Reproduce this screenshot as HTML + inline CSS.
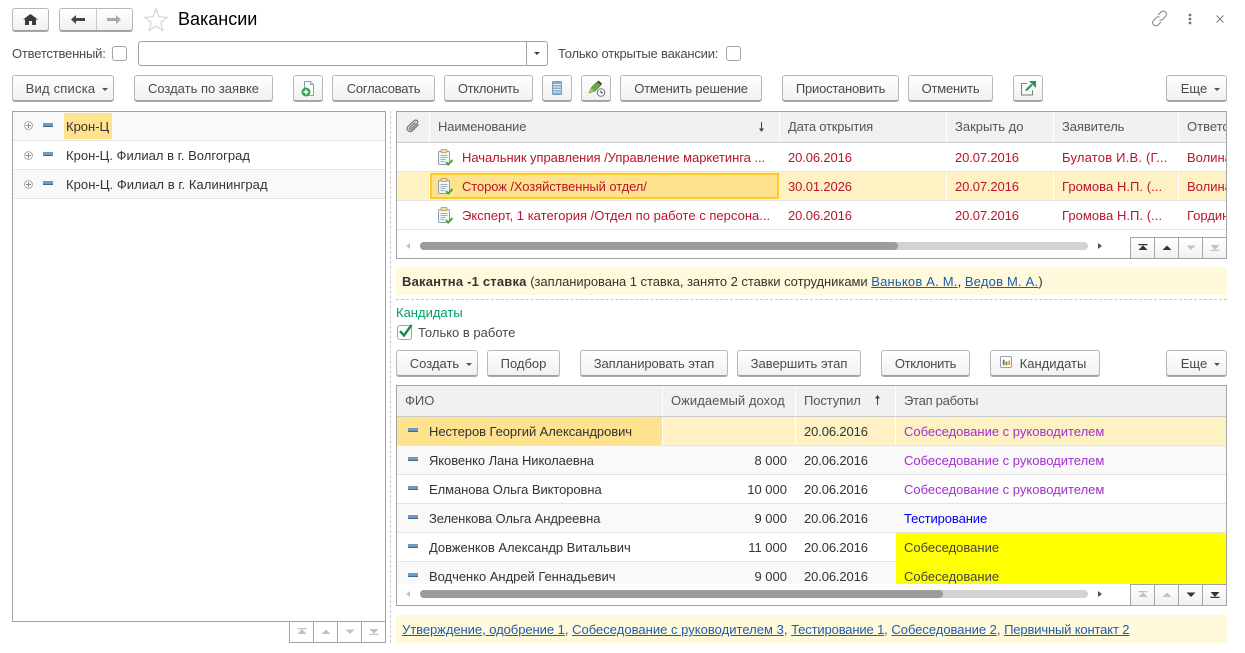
<!DOCTYPE html>
<html lang="ru"><head><meta charset="utf-8"><title>Вакансии</title>
<style>
html,body{margin:0;padding:0;background:#fff}
#p{position:relative;width:1245px;height:653px;overflow:hidden;background:#fff;font:13px/16px "Liberation Sans",Arial,sans-serif;color:#4a4a4a}
#p div,#p a,#p svg{position:absolute;box-sizing:border-box}
.t{white-space:nowrap}
.b{height:26px;top:75px;border:1px solid #b8b8b8;border-bottom:1px solid #a0a0a0;border-radius:3px;background:linear-gradient(#fff,#f1f1f1);box-shadow:0 1px 0 #a8a8a8;text-align:center;line-height:25px;white-space:nowrap;color:#4a4a4a}
.dd{padding-left:8px}
.b2{top:350px}
.tri{display:inline-block;width:0;height:0;border:3px solid transparent;border-top:3px solid #555;border-bottom:0;margin-left:7px;vertical-align:2px}
.box{position:absolute;border:1px solid #a4a4a4}
.h{background:#f1f1f1}
.th{white-space:nowrap;color:#555;line-height:16px}
.c{white-space:nowrap;color:#333;line-height:16px}
.d{letter-spacing:-.12px}
.r{color:#b9152f}
.m{color:#a22fd2}
a{color:#1f5cb0;text-decoration:underline}
#p a{position:static}
.l{height:1px;background:#e4e4e4}
.n{width:24px;height:22px;background:linear-gradient(#fff,#f1f1f1);border:1px solid #a4a4a4;border-right:0}
.n svg{left:0;top:-1px}
</style></head><body><div id="p">
<svg width="0" height="0" style="left:0;top:0"><defs>
<symbol id="minus" viewBox="0 0 10 4"><rect width="10" height="3" fill="#6f9abf"/><rect y="3" width="10" height="1" fill="#44688a"/></symbol>
<symbol id="plus" viewBox="0 0 9 9"><circle cx="4.500" cy="4.500" r="3.900" fill="#fff" stroke="#a8a8a8"/><path d="M4.500 2v5M2 4.500h5" stroke="#888"/></symbol>
<symbol id="task" viewBox="0 0 18 18"><rect x="1.500" y="2.500" width="11" height="13" rx="1" fill="#f0f5f8" stroke="#8fa0ac"/><rect x="4" y=".5" width="6" height="3" rx="1" fill="#f6dc94" stroke="#a8955a" stroke-width=".8"/><path d="M3.500 6.500h7M3.500 8.500h7M3.500 10.500h5M3.500 12.500h4" stroke="#9fb0bd"/><path d="M9 13l2.200 2.500 4.300-4.500" fill="none" stroke="#4aa82f" stroke-width="2"/></symbol>
<symbol id="up2" viewBox="0 0 24 22"><path d="M7.500 7h9v1.200h-9zM7.500 13l4.500-4.800 4.500 4.800z"/></symbol>
<symbol id="up" viewBox="0 0 24 22"><path d="M7.500 13l4.500-4.500 4.500 4.500z"/></symbol>
<symbol id="dn" viewBox="0 0 24 22"><path d="M7.500 8.500l4.500 4.500 4.500-4.500z"/></symbol>
<symbol id="dn2" viewBox="0 0 24 22"><path d="M7.500 8l4.500 4.800 4.500-4.800zM7.500 12.800h9V14h-9z"/></symbol>
</defs></svg>

<!-- header -->
<div class="b" style="left:12px;top:8px;width:37px;height:23px"></div>
<svg style="left:23px;top:14px" width="15" height="11" viewBox="0 0 15 11"><path d="M7.500 0L0 5.500h2V11h4V7h3v4h4V5.500h2z" fill="#3c3c3c"/></svg>
<div class="b" style="left:59px;top:8px;width:74px;height:23px"></div>
<div style="left:96px;top:9px;width:1px;height:21px;background:#c8c8c8"></div>
<svg style="left:71px;top:15px" width="14" height="9" viewBox="0 0 14 9"><path d="M0 4.500L5 0v3h9v3H5v3z" fill="#444"/></svg>
<svg style="left:107px;top:15px" width="14" height="9" viewBox="0 0 14 9"><path d="M14 4.500L9 0v3H0v3h9v3z" fill="#a8a8a8"/></svg>
<svg style="left:144px;top:8px" width="24" height="23" viewBox="0 0 24 23"><path d="M12 1l3 7.800 8 .5-6.200 5.200 2 8L12 18l-6.800 4.500 2-8L1 9.300l8-.5z" fill="#fff" stroke="#c8cdd0"/></svg>
<div class="t" style="left:178px;top:8px;font-size:18px;line-height:22px;color:#000">Вакансии</div>
<svg style="left:1151px;top:10px" width="17" height="17" viewBox="0 0 17 17"><g fill="none" stroke="#808080"><path d="M7 5l3-3a2.800 2.800 0 0 1 4.500 4.500L11.500 9.500a2.800 2.800 0 0 1-3 .5"/><path d="M10 12l-3 3a2.800 2.800 0 0 1-4.500-4.500L5.500 7.500a2.800 2.800 0 0 1 3-.5"/></g></svg>
<svg style="left:1188px;top:13px" width="4" height="12" viewBox="0 0 4 12"><g fill="#777"><circle cx="2" cy="2" r="1.400"/><circle cx="2" cy="6" r="1.400"/><circle cx="2" cy="10" r="1.400"/></g></svg>
<svg style="left:1216px;top:15px" width="8" height="8" viewBox="0 0 8 8"><path d="M.5.500l7 7M7.500.500l-7 7" stroke="#777"/></svg>

<!-- filter row -->
<div class="t" style="left:12px;top:46px;letter-spacing:-.2px">Ответственный:</div>
<div class="box" style="left:112px;top:46px;width:15px;height:15px;border-radius:3px"></div>
<div class="box" style="left:138px;top:41px;width:410px;height:25px;border-radius:3px"></div>
<div style="left:526px;top:42px;width:1px;height:23px;background:#a4a4a4"></div>
<div style="left:534px;top:52px;width:0;height:0;border:3px solid transparent;border-top:3px solid #444;border-bottom:0"></div>
<div class="t" style="left:558px;top:46px;letter-spacing:-.2px">Только открытые вакансии:</div>
<div class="box" style="left:726px;top:46px;width:15px;height:15px;border-radius:3px"></div>

<!-- toolbar -->
<div class="b dd" style="left:12px;width:102px"><span style="letter-spacing:.2px">Вид списка</span><span class="tri"></span></div>
<div class="b" style="left:134px;width:139px">Создать по заявке</div>
<div class="b" style="left:293px;width:30px"></div>
<svg style="left:301px;top:81px" width="14" height="16" viewBox="0 0 14 16"><path d="M3.500.500h6l3 3v11h-9z" fill="#fff" stroke="#8fa0ac"/><path d="M9.500.500v3h3" fill="#dfe6ea" stroke="#8fa0ac"/><circle cx="5" cy="11" r="4.500" fill="#2fa84a"/><path d="M5 8.500v5M2.500 11h5" stroke="#fff" stroke-width="1.500"/></svg>
<div class="b" style="left:332px;width:103px;letter-spacing:-.25px">Согласовать</div>
<div class="b" style="left:444px;width:89px;letter-spacing:-.3px">Отклонить</div>
<div class="b" style="left:542px;width:30px"></div>
<svg style="left:552px;top:81px" width="10" height="14" viewBox="0 0 10 14"><rect x=".5" y=".5" width="9" height="13" rx="1" fill="#8aaccb" stroke="#7a9cbb"/><path d="M1 3.500h8M1 6h8M1 8.500h8M1 11h8" stroke="#e4edf4"/></svg>
<div class="b" style="left:581px;width:30px"></div>
<svg style="left:588px;top:80px" width="18" height="18" viewBox="0 0 18 18"><path d="M1 13l2-5 6-6 4 3-6 6z" fill="#5cae45" stroke="#3d7d2d" stroke-width=".6"/><path d="M9 2l1.500-1.500 3.500 3L13 5z" fill="#444"/><path d="M1 13l2-5 3 3z" fill="#e3b266"/><circle cx="13" cy="12.500" r="3.800" fill="#fff" stroke="#66757f"/><path d="M13 10.500v2.300h2" fill="none" stroke="#444"/></svg>
<div class="b" style="left:620px;width:142px;letter-spacing:-.2px">Отменить решение</div>
<div class="b" style="left:782px;width:117px;letter-spacing:-.2px">Приостановить</div>
<div class="b" style="left:908px;width:85px;letter-spacing:-.2px">Отменить</div>
<div class="b" style="left:1013px;width:30px"></div>
<svg style="left:1021px;top:81px" width="15" height="15" viewBox="0 0 15 15"><path d="M6 2.500H.5v11.500h11V9" fill="none" stroke="#808080"/><path d="M5 9.500L11 3.500" stroke="#1d9a54" stroke-width="2"/><path d="M8 0h7v7z" fill="#1d9a54"/></svg>
<div class="b dd" style="left:1166px;width:61px">Еще<span class="tri"></span></div>

<!-- left tree -->
<div class="box" style="left:12px;top:111px;width:374px;height:511px"></div>
<div style="left:13px;top:112px;width:372px;height:28px;background:#f9f9f9"></div>
<div class="l" style="left:13px;top:140px;width:372px"></div>
<div class="l" style="left:13px;top:169px;width:372px"></div>
<div style="left:13px;top:170px;width:372px;height:28px;background:#f9f9f9"></div>
<div class="l" style="left:13px;top:198px;width:372px"></div>
<div style="left:64px;top:113px;width:48px;height:26px;background:#fee28e"></div>
<svg style="left:24px;top:121px" width="9" height="9"><use href="#plus"/></svg>
<svg style="left:24px;top:151px" width="9" height="9"><use href="#plus"/></svg>
<svg style="left:24px;top:180px" width="9" height="9"><use href="#plus"/></svg>
<svg style="left:43px;top:123px" width="10" height="4"><use href="#minus"/></svg>
<svg style="left:43px;top:152px" width="10" height="4"><use href="#minus"/></svg>
<svg style="left:43px;top:181px" width="10" height="4"><use href="#minus"/></svg>
<div class="c" style="left:66px;top:119px">Крон-Ц</div>
<div class="c" style="left:66px;top:148px;letter-spacing:.02px">Крон-Ц. Филиал в г. Волгоград</div>
<div class="c" style="left:66px;top:177px;letter-spacing:.06px">Крон-Ц. Филиал в г. Калининград</div>
<div class="n" style="left:289px;top:621px;background:#fff"><svg width="24" height="22" fill="#c2c2c2"><use href="#up2"/></svg></div>
<div class="n" style="left:313px;top:621px;background:#fff"><svg width="24" height="22" fill="#c2c2c2"><use href="#up"/></svg></div>
<div class="n" style="left:337px;top:621px;background:#fff"><svg width="24" height="22" fill="#c2c2c2"><use href="#dn"/></svg></div>
<div class="n" style="left:361px;top:621px;width:25px;border-right:1px solid #a4a4a4;background:#fff"><svg width="24" height="22" fill="#c2c2c2"><use href="#dn2"/></svg></div>

<!-- splitter -->
<div style="left:390px;top:111px;width:0;height:532px;border-left:1px dashed #c8c8c8"></div>

<!-- table 1 -->
<div class="box" style="left:396px;top:111px;width:831px;height:148px"></div>
<div style="left:397px;top:112px;width:829px;height:30px;background:#fff;overflow:hidden">
  <div class="h" style="left:0;top:0;width:32px;height:30px"></div>
  <div class="h" style="left:33px;top:0;width:349px;height:30px"></div>
  <div class="h" style="left:383px;top:0;width:166px;height:30px"></div>
  <div class="h" style="left:550px;top:0;width:106px;height:30px"></div>
  <div class="h" style="left:657px;top:0;width:124px;height:30px"></div>
  <div class="h" style="left:782px;top:0;width:50px;height:30px"></div>
  <div class="th" style="left:41px;top:7px;letter-spacing:-.15px">Наименование</div>
  <div class="th" style="left:391px;top:7px;letter-spacing:-.22px">Дата открытия</div>
  <div class="th" style="left:558px;top:7px">Закрыть до</div>
  <div class="th" style="left:665px;top:7px;letter-spacing:-.1px">Заявитель</div>
  <div class="th" style="left:790px;top:7px">Ответс</div>
</div>
<svg style="left:406px;top:119px" width="14" height="14" viewBox="0 0 14 14"><path d="M12.500 5.500L6 12a3 3 0 0 1-4.200-4.200L8.500 1.500a2 2 0 0 1 2.800 2.800L5 10.500a1 1 0 0 1-1.400-1.400L9.500 3.500" fill="none" stroke="#777" stroke-width="1.300"/></svg>
<svg style="left:758px;top:122px" width="7" height="10" viewBox="0 0 7 10"><path d="M3.500 0v8" stroke="#444"/><path d="M1 6.500L3.500 10 6 6.500z" fill="#444"/></svg>
<div class="l" style="left:397px;top:142px;width:829px;background:#ccc"></div>
<div class="l" style="left:397px;top:171px;width:829px"></div>
<div style="left:397px;top:172px;width:829px;height:28px;background:#fef1c4"></div>
<div style="left:946px;top:172px;width:1px;height:28px;background:#fff"></div>
<div style="left:1053px;top:172px;width:1px;height:28px;background:#fff"></div>
<div style="left:1178px;top:172px;width:1px;height:28px;background:#fff"></div>
<div style="left:429px;top:172px;width:1px;height:28px;background:#fff"></div>
<div style="left:430px;top:173px;width:349px;height:26px;background:#fee28e;border:2px solid #fccb2e"></div>
<div class="l" style="left:397px;top:200px;width:829px"></div>
<div class="l" style="left:397px;top:229px;width:829px"></div>
<svg style="left:437px;top:149px" width="18" height="18"><use href="#task"/></svg>
<svg style="left:437px;top:178px" width="18" height="18"><use href="#task"/></svg>
<svg style="left:437px;top:207px" width="18" height="18"><use href="#task"/></svg>
<div class="c r" style="left:462px;top:150px;letter-spacing:-.04px">Начальник управления /Управление маркетинга ...</div>
<div class="c r d" style="left:788px;top:150px">20.06.2016</div>
<div class="c r d" style="left:955px;top:150px">20.07.2016</div>
<div class="c r" style="left:1062px;top:150px;letter-spacing:.2px">Булатов И.В. (Г...</div>
<div class="c r" style="left:1187px;top:150px;width:39px;overflow:hidden">Волина</div>
<div class="c r" style="left:462px;top:179px;letter-spacing:-.1px">Сторож /Хозяйственный отдел/</div>
<div class="c r d" style="left:788px;top:179px">30.01.2026</div>
<div class="c r d" style="left:955px;top:179px">20.07.2016</div>
<div class="c r" style="left:1062px;top:179px;letter-spacing:.05px">Громова Н.П. (...</div>
<div class="c r" style="left:1187px;top:179px;width:39px;overflow:hidden">Волина</div>
<div class="c r" style="left:462px;top:208px;letter-spacing:.02px">Эксперт, 1 категория /Отдел по работе с персона...</div>
<div class="c r d" style="left:788px;top:208px">20.06.2016</div>
<div class="c r d" style="left:955px;top:208px">20.07.2016</div>
<div class="c r" style="left:1062px;top:208px;letter-spacing:.05px">Громова Н.П. (...</div>
<div class="c r" style="left:1187px;top:208px;width:39px;overflow:hidden">Гордин</div>
<div style="left:420px;top:242px;width:668px;height:8px;border-radius:4px;background:#d2d2d2"></div>
<div style="left:420px;top:242px;width:478px;height:8px;border-radius:4px;background:#9c9c9c"></div>
<svg style="left:406px;top:243px" width="4" height="6"><path d="M4 0v6L0 3z" fill="#c4c4c4"/></svg>
<svg style="left:1098px;top:243px" width="4" height="6"><path d="M0 0v6l4-3z" fill="#555"/></svg>
<div class="n" style="left:1130px;top:237px"><svg width="24" height="22" fill="#333"><use href="#up2"/></svg></div>
<div class="n" style="left:1154px;top:237px"><svg width="24" height="22" fill="#333"><use href="#up"/></svg></div>
<div class="n" style="left:1178px;top:237px"><svg width="24" height="22" fill="#c2c2c2"><use href="#dn"/></svg></div>
<div class="n" style="left:1202px;top:237px;width:25px;border-right:1px solid #a4a4a4"><svg width="24" height="22" fill="#c2c2c2"><use href="#dn2"/></svg></div>

<!-- info bar -->
<div style="left:396px;top:267px;width:831px;height:28px;background:#fffadc"></div>
<div class="t" style="left:402px;top:274px;color:#333"><b style="letter-spacing:.2px">Вакантна -1 ставка</b> <span style="letter-spacing:-.05px">(запланирована 1 ставка, занято 2 ставки сотрудниками</span> <a href="#" style="letter-spacing:.2px">Ваньков А. М.</a>, <a href="#" style="letter-spacing:.2px">Ведов М. А.</a>)</div>
<div style="left:396px;top:299px;width:831px;height:0;border-top:1px dashed #c8c8c8"></div>
<div class="t" style="left:396px;top:305px;color:#00a060">Кандидаты</div>
<div class="box" style="left:397px;top:325px;width:15px;height:15px;border-radius:3px"></div>
<svg style="left:398px;top:323px" width="15" height="15" viewBox="0 0 15 15"><path d="M2 8l4 4.500L13.500 2" fill="none" stroke="#14884a" stroke-width="2.400"/></svg>
<div class="t" style="left:418px;top:325px">Только в работе</div>

<div class="b b2 dd" style="left:396px;width:82px">Создать<span class="tri"></span></div>
<div class="b b2" style="left:487px;width:73px">Подбор</div>
<div class="b b2" style="left:580px;width:148px;letter-spacing:-.1px">Запланировать этап</div>
<div class="b b2" style="left:737px;width:124px">Завершить этап</div>
<div class="b b2" style="left:881px;width:89px;letter-spacing:-.3px">Отклонить</div>
<div class="b b2" style="left:990px;width:110px;padding-left:16px">Кандидаты</div>
<svg style="left:1000px;top:356px" width="12" height="12" viewBox="0 0 13 13"><rect x=".5" y=".5" width="12" height="12" rx="1.500" fill="#fff" stroke="#8a97a3"/><rect x="3" y="4" width="2" height="6" fill="#d24a3a"/><rect x="6" y="6" width="2" height="4" fill="#3fa04a"/><rect x="9" y="5" width="2" height="5" fill="#e0a030"/></svg>
<div class="b b2 dd" style="left:1166px;width:61px">Еще<span class="tri"></span></div>

<!-- table 2 -->
<div class="box" style="left:396px;top:385px;width:831px;height:221px"></div>
<div class="h" style="left:397px;top:386px;width:265px;height:30px"></div>
<div class="h" style="left:663px;top:386px;width:132px;height:30px"></div>
<div class="h" style="left:796px;top:386px;width:99px;height:30px"></div>
<div class="h" style="left:896px;top:386px;width:330px;height:30px"></div>
<div class="th" style="left:405px;top:393px">ФИО</div>
<div class="th" style="left:671px;top:393px;letter-spacing:.06px">Ожидаемый доход</div>
<div class="th" style="left:804px;top:393px;letter-spacing:-.1px">Поступил</div>
<svg style="left:874px;top:395px" width="7" height="10" viewBox="0 0 7 10"><path d="M3.500 10V2" stroke="#444"/><path d="M1 3.500L3.500 0 6 3.500z" fill="#444"/></svg>
<div class="th" style="left:904px;top:393px;letter-spacing:-.27px">Этап работы</div>
<div class="l" style="left:397px;top:416px;width:829px;background:#ccc"></div>

<div style="left:397px;top:417px;width:265px;height:28px;background:#fee28e"></div>
<div style="left:663px;top:417px;width:132px;height:28px;background:#fef1c4"></div>
<div style="left:796px;top:417px;width:99px;height:28px;background:#fef1c4"></div>
<div style="left:896px;top:417px;width:330px;height:28px;background:#fef1c4"></div>
<div class="l" style="left:397px;top:445px;width:829px"></div>
<div style="left:397px;top:446px;width:829px;height:28px;background:#f9f9f9"></div>
<div class="l" style="left:397px;top:474px;width:829px"></div>
<div class="l" style="left:397px;top:503px;width:829px"></div>
<div style="left:397px;top:504px;width:829px;height:28px;background:#f9f9f9"></div>
<div class="l" style="left:397px;top:532px;width:829px"></div>
<div class="l" style="left:397px;top:561px;width:829px"></div>
<div style="left:397px;top:562px;width:829px;height:22px;background:#f9f9f9"></div>
<div style="left:896px;top:533px;width:330px;height:28px;background:#ff0"></div>
<div style="left:896px;top:562px;width:330px;height:22px;background:#ff0"></div>

<svg style="left:408px;top:428px" width="10" height="4"><use href="#minus"/></svg>
<svg style="left:408px;top:457px" width="10" height="4"><use href="#minus"/></svg>
<svg style="left:408px;top:486px" width="10" height="4"><use href="#minus"/></svg>
<svg style="left:408px;top:515px" width="10" height="4"><use href="#minus"/></svg>
<svg style="left:408px;top:544px" width="10" height="4"><use href="#minus"/></svg>
<svg style="left:408px;top:573px" width="10" height="4"><use href="#minus"/></svg>

<div class="c" style="left:429px;top:424px;letter-spacing:-.07px">Нестеров Георгий Александрович</div>
<div class="c d" style="left:804px;top:424px">20.06.2016</div>
<div class="c m" style="left:904px;top:424px">Собеседование с руководителем</div>

<div class="c" style="left:429px;top:453px;letter-spacing:-.08px">Яковенко Лана Николаевна</div>
<div class="c" style="left:663px;top:453px;width:124px;text-align:right">8 000</div>
<div class="c d" style="left:804px;top:453px">20.06.2016</div>
<div class="c m" style="left:904px;top:453px">Собеседование с руководителем</div>

<div class="c" style="left:429px;top:482px;letter-spacing:-.08px">Елманова Ольга Викторовна</div>
<div class="c" style="left:663px;top:482px;width:124px;text-align:right">10 000</div>
<div class="c d" style="left:804px;top:482px">20.06.2016</div>
<div class="c m" style="left:904px;top:482px">Собеседование с руководителем</div>

<div class="c" style="left:429px;top:511px;letter-spacing:-.08px">Зеленкова Ольга Андреевна</div>
<div class="c" style="left:663px;top:511px;width:124px;text-align:right">9 000</div>
<div class="c d" style="left:804px;top:511px">20.06.2016</div>
<div class="c" style="left:904px;top:511px;color:#0000f0;letter-spacing:-.1px">Тестирование</div>

<div class="c" style="left:429px;top:540px;letter-spacing:-.03px">Довженков Александр Витальвич</div>
<div class="c" style="left:663px;top:540px;width:124px;text-align:right">11 000</div>
<div class="c d" style="left:804px;top:540px">20.06.2016</div>
<div class="c" style="left:904px;top:540px;color:#444">Собеседование</div>

<div class="c" style="left:429px;top:569px;letter-spacing:-.03px">Водченко Андрей Геннадьевич</div>
<div class="c" style="left:663px;top:569px;width:124px;text-align:right">9 000</div>
<div class="c d" style="left:804px;top:569px">20.06.2016</div>
<div class="c" style="left:904px;top:569px;color:#444">Собеседование</div>

<div style="left:397px;top:584px;width:829px;height:21px;background:#fff"></div>
<div style="left:420px;top:590px;width:668px;height:8px;border-radius:4px;background:#d2d2d2"></div>
<div style="left:420px;top:590px;width:523px;height:8px;border-radius:4px;background:#9c9c9c"></div>
<svg style="left:406px;top:591px" width="4" height="6"><path d="M4 0v6L0 3z" fill="#c4c4c4"/></svg>
<svg style="left:1098px;top:591px" width="4" height="6"><path d="M0 0v6l4-3z" fill="#555"/></svg>
<div class="n" style="left:1130px;top:584px"><svg width="24" height="22" fill="#c2c2c2"><use href="#up2"/></svg></div>
<div class="n" style="left:1154px;top:584px"><svg width="24" height="22" fill="#c2c2c2"><use href="#up"/></svg></div>
<div class="n" style="left:1178px;top:584px"><svg width="24" height="22" fill="#333"><use href="#dn"/></svg></div>
<div class="n" style="left:1202px;top:584px;width:25px;border-right:1px solid #a4a4a4"><svg width="24" height="22" fill="#333"><use href="#dn2"/></svg></div>

<!-- bottom bar -->
<div style="left:396px;top:615px;width:831px;height:28px;background:#fffadc"></div>
<div class="t" style="left:402px;top:622px;color:#555"><a href="#" style="letter-spacing:-.05px">Утверждение, одобрение 1</a>, <a href="#" style="letter-spacing:.02px">Собеседование с руководителем 3</a>, <a href="#" style="letter-spacing:-.15px">Тестирование 1</a>, <a href="#" style="letter-spacing:-.03px">Собеседование 2</a>, <a href="#" style="letter-spacing:-.15px">Первичный контакт 2</a></div>
</div></body></html>
